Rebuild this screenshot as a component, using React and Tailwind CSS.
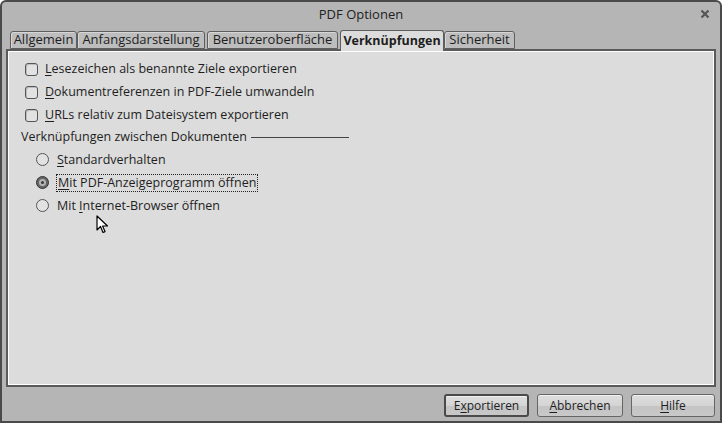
import React from "react";

const font = { fontFamily: '"Open Sans", "Noto Sans", sans-serif' };

function U({ children }) {
  return <span className="underline underline-offset-2">{children}</span>;
}

function Checkbox({ children }) {
  return (
    <div className="flex h-[23px] items-center pl-[17px]">
      <div className="h-[13px] w-[13px] rounded-[3px] border border-[#555] bg-[#e2e2e2] shadow-[inset_1px_1px_0_#bdbdbd]" />
      <span className="ml-[7px]">{children}</span>
    </div>
  );
}

function Radio({ checked, focused, children }) {
  return (
    <div className="flex h-[23px] items-center pl-[28px]">
      {checked ? (
        <div className="flex h-[13px] w-[13px] items-center justify-center rounded-full border border-[#333] bg-[#666]">
          <div className="flex h-[7px] w-[7px] items-center justify-center rounded-full bg-[#b5b5b5]">
            <div className="h-[3px] w-[3px] rounded-full bg-[#3a3a3a]" />
          </div>
        </div>
      ) : (
        <div className="h-[13px] w-[13px] rounded-full border border-[#555] bg-[#e2e2e2]" />
      )}
      <span
        className={
          focused
            ? "ml-[7px] border border-dotted border-[#222] px-[1px] leading-[16px]"
            : "ml-[8px] leading-[16px]"
        }
      >
        {children}
      </span>
    </div>
  );
}

function Tab({ w, active, className = "", children }) {
  return (
    <div
      className={
        (active
          ? "z-10 h-[21px] bg-[#dcdcdc] font-bold text-[12.5px] border-b-0 mb-[-2px] "
          : "h-[18px] bg-[#bdbdbd] text-[13px] shadow-[inset_1px_1px_0_#d6d6d6] ") +
        "flex items-center justify-center rounded-t-[3px] border border-[#5e5e5e] text-[#1e1e1e] " +
        className
      }
      style={{ width: w }}
    >
      {children}
    </div>
  );
}

function Button({ def, w, children }) {
  return (
    <div
      className={
        (def ? "border-2 border-[#4a4a4a] " : "border border-[#666] ") +
        "flex h-[23px] items-center justify-center rounded-[3px] bg-[linear-gradient(#dedede_0%,#d4d4d4_50%,#c4c4c4_51%,#c8c8c8_100%)] text-[12px] text-[#1e1e1e] shadow-[inset_0_1px_0_#f0f0f0]"
      }
      style={{ width: w }}
    >
      {children}
    </div>
  );
}

export default function App() {
  return (
    <div
      className="relative flex h-[423px] w-[722px] flex-col overflow-hidden rounded-t-[6px] border-2 border-[#4a4a4a] bg-[#b5b5b5] text-[12px] text-[#1e1e1e]"
      style={font}
    >
      {/* title bar */}
      <div className="relative flex h-[26px] items-center justify-center text-[13px] text-[#222]">
        PDF Optionen
        <svg
          className="absolute left-[698px] top-[7px]"
          width="10"
          height="10"
          viewBox="0 0 10 10"
        >
          <path d="M1.5 1.5 L8.5 8.5 M8.5 1.5 L1.5 8.5" stroke="#555" strokeWidth="2.2" />
        </svg>
      </div>

      {/* tabs */}
      <div className="flex h-[21px] items-end pl-[8px]">
        <Tab w={67}>Allgemein</Tab>
        <Tab w={128}>Anfangsdarstellung</Tab>
        <Tab w={131} className="ml-[2px]">Benutzeroberfläche</Tab>
        <Tab w={104} active className="ml-[2px]">Verknüpfungen</Tab>
        <Tab w={71}>Sicherheit</Tab>
      </div>

      {/* page content */}
      <div className="ml-[4px] h-[338px] w-[710px] border-2 border-[#5a5a5a] bg-[#dcdcdc] pt-[7px] shadow-[inset_1px_1px_0_#fff,inset_-1px_-1px_0_#fff] text-[12.5px]">
        <Checkbox>
          <U>L</U>esezeichen als benannte Ziele exportieren
        </Checkbox>
        <Checkbox>
          <U>D</U>okumentreferenzen in PDF-Ziele umwandeln
        </Checkbox>
        <Checkbox>
          <U>U</U>RLs relativ zum Dateisystem exportieren
        </Checkbox>
        <div className="flex h-[21px] w-[341px] items-center pl-[13px]">
          <span>Verknüpfungen zwischen Dokumenten</span>
          <div className="ml-[4px] h-px flex-1 bg-[#444]" />
        </div>
        <Radio>
          <U>S</U>tandardverhalten
        </Radio>
        <Radio checked focused>
          <U>M</U>it PDF-Anzeigeprogramm öffnen
        </Radio>
        <Radio>
          Mit <U>I</U>nternet-Browser öffnen
        </Radio>
      </div>

      {/* dialog buttons */}
      <div className="flex h-[34px] justify-end gap-[8px] pr-[5px] pt-[7px]">
        <Button def w={85}>
          E<U>x</U>portieren
        </Button>
        <Button w={86}>
          <U>A</U>bbrechen
        </Button>
        <Button w={84}>
          <U>H</U>ilfe
        </Button>
      </div>

      {/* mouse pointer */}
      <svg
        className="absolute left-[94px] top-[213px]"
        width="14"
        height="20"
        viewBox="0 0 14 20"
      >
        <path
          d="M1 1 L1 15 L4.5 11.5 L7 17.5 L9 16.6 L6.6 11 L11.5 11 Z"
          fill="#fff"
          stroke="#000"
          strokeWidth="1.2"
          strokeLinejoin="round"
        />
      </svg>
    </div>
  );
}
